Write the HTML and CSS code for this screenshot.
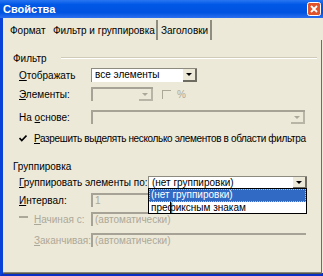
FILE: index.html
```html
<!DOCTYPE html>
<html lang="ru">
  <head>
    <meta charset="UTF-8" />
    <title>Свойства</title>
    <link rel="stylesheet" href="styles.css">
  </head>
  <body>
    <div class="window">
      <div class="titlebar">
        <span class="title">Свойства</span>
        <span class="close">
          <svg width="14" height="14" viewBox="0 0 14 14">
            <rect x="0.5" y="0.5" width="13" height="13" rx="2" fill="#e0532b" stroke="#fff" />
            <path d="M4 4 L10 10 M10 4 L4 10" stroke="#fff" stroke-width="1.8" />
          </svg>
        </span>
      </div>

      <div class="tabs">
        <div class="tab t1">Формат</div>
        <div class="tab t2 active">Фильтр и группировка</div>
        <div class="tab t3">Заголовки</div>
      </div>

      <div class="panel">
        <div class="group-title"><span>Фильтр</span><i class="rule"></i></div>

        <div class="row r-show">
          <span class="lbl"><u>О</u>тображать</span>
          <div class="combo w-show">
            <span class="val">все элементы</span>
            <span class="btn"><b class="arr"></b></span>
          </div>
        </div>

        <div class="row r-items">
          <span class="lbl"><u>Э</u>лементы:</span>
          <div class="combo off w-items">
            <span class="val"></span>
            <span class="btn"><b class="arr"></b></span>
          </div>
          <span class="check off"></span>
          <span class="dim pct">%</span>
        </div>

        <div class="row r-base">
          <span class="lbl">На <u>о</u>снове:</span>
          <div class="combo off w-base">
            <span class="val"></span>
            <span class="btn"><b class="arr"></b></span>
          </div>
        </div>

        <div class="row r-multi">
          <svg class="tick" width="8" height="7" viewBox="0 0 8 7">
            <path d="M0.5 3 L2.8 5.6 L7.5 0.6" fill="none" stroke="#000" stroke-width="1.7" />
          </svg>
          <span class="long-text"><u>Р</u>азрешить выделять несколько элементов в области фильтра</span>
        </div>

        <div class="group-title g2"><span>Группировка</span></div>

        <div class="row r-group">
          <span class="lbl wide"><u>Г</u>руппировать элементы по:</span>
          <div class="combo w-group">
            <span class="val">(нет группировки)</span>
            <span class="btn"><b class="arr"></b></span>
            <ul class="list">
              <li class="sel">(нет группировки)</li>
              <li>префиксным знакам</li>
            </ul>
          </div>
        </div>

        <div class="row r-step">
          <span class="lbl"><u>И</u>нтервал:</span>
          <div class="field off w-step">1</div>
        </div>

        <div class="row r-start">
          <span class="check dash"></span>
          <span class="lbl dim short"><u>Н</u>ачиная с:</span>
          <div class="field off w-long">(автоматически)</div>
        </div>

        <div class="row r-end">
          <span class="lbl dim short pad"><u>З</u>аканчивая:</span>
          <div class="field off w-long">(автоматически)</div>
        </div>
      </div>
    </div>
  </body>
</html>
```

FILE: styles.css
```css
* {
  box-sizing: border-box;
}
body {
  margin: 0;
  background: #ece9d8;
  font-family: "Liberation Sans", Tahoma, Arial, sans-serif;
  font-size: 10px;
  color: #000;
  overflow: hidden;
}
u {
  text-decoration: underline;
}

/* window frame */
.window {
  width: 323px;
  height: 276px;
  background: #ece9d8;
  border-left: 3px solid #0842d6;
  border-bottom: 3px solid #0a2fc4;
  display: flex;
  flex-direction: column;
}
.titlebar {
  height: 18px;
  margin-left: -3px;
  padding-left: 3px;
  display: flex;
  align-items: center;
  background: linear-gradient(#2a76f2 0%, #0058e6 25%, #0052e0 70%, #2b6ff0 100%);
}
.title {
  flex: 1;
  color: #fff;
  font-weight: 700;
  font-size: 11px;
}
.close {
  width: 14px;
  height: 14px;
  margin-right: 2px;
  display: flex;
}

/* tabs */
.tabs {
  display: flex;
  height: 22px;
  padding-top: 2px;
}
.tab {
  height: 20px;
  line-height: 22px;
  white-space: nowrap;
}
.t1 {
  width: 45px;
  padding-left: 7px;
}
.t2 {
  width: 110px;
  padding-left: 5px;
  line-height: 21px;
  border-right: 2px solid #8f8d80;
}
.t3 {
  width: 54px;
  padding-left: 3px;
  border-right: 2px solid #8f8d80;
}

/* tab page */
.panel {
  flex: 1;
  position: relative;
  padding-top: 12px;
  border-right: 1px solid #6f6d62;
  margin-right: 1px;
  border-bottom: 1px solid #8a887a;
  box-shadow: 0 1px 0 #55544b;
}
.group-title {
  display: flex;
  align-items: center;
  height: 12px;
  padding-left: 10px;
}
.group-title .rule {
  flex: 0 0 256px;
  margin-left: 14px;
  border-top: 1px solid #cfcbb8;
  border-bottom: 1px solid #fff;
}
.g2 {
  margin-top: 15px;
}

.row {
  display: flex;
  align-items: center;
  height: 14px;
  padding-left: 16px;
  white-space: nowrap;
}
.row > * {
  flex-shrink: 0;
}
.r-show {
  margin-top: 4px;
}
.r-items {
  margin-top: 5px;
}
.r-base {
  margin-top: 9px;
}
.r-multi {
  margin-top: 7px;
}
.r-group {
  margin-top: 4px;
  height: 13px;
}
.r-step {
  margin-top: 4px;
}
.r-start {
  margin-top: 5px;
}
.r-end {
  margin-top: 7px;
}

.lbl {
  width: 72px;
}
.lbl.wide {
  width: 129px;
}
.lbl.short {
  width: 57px;
}
.lbl.pad {
  margin-left: 15px;
}
.dim {
  color: #aca899;
}
.long-text {
  letter-spacing: -0.35px;
}

/* combo boxes */
.combo {
  position: relative;
  height: 100%;
  display: flex;
  background: #fff;
  border-top: 1px solid #8d8b7f;
  border-left: 1px solid #8d8b7f;
}
.combo .val {
  flex: 1;
  padding-left: 3px;
  line-height: 12px;
  overflow: hidden;
}
.combo .btn {
  width: 14px;
  display: flex;
  align-items: center;
  justify-content: center;
  background: #ece9d8;
  border-right: 2px solid #6e6c60;
  border-bottom: 2px solid #6e6c60;
}
.arr {
  border-left: 3px solid transparent;
  border-right: 3px solid transparent;
  border-top: 3px solid #000;
}
.combo.off {
  background: #ece9d8;
  border-top: 2px solid #a6a396;
  border-left: 2px solid #a6a396;
}
.combo.off .btn {
  border-color: #b8b5a6;
}
.combo.off .arr {
  border-top-color: #aca899;
}
.w-show {
  width: 106px;
}
.w-items {
  width: 62px;
}
.w-base {
  width: 214px;
}
.w-group {
  width: 159px;
}

/* open drop-down list */
.list {
  position: absolute;
  left: -1px;
  top: 11px;
  width: 159px;
  height: 26px;
  margin: 0;
  padding: 0;
  list-style: none;
  background: #fff;
  border: 1px solid #000;
  z-index: 2;
}
.list li {
  height: 12px;
  line-height: 12px;
  padding-left: 2px;
}
.list li.sel {
  height: 13px;
  color: #fff;
  background: #316ac5;
  outline: 1px dotted #f0c050;
  outline-offset: -1px;
}
.list::after {
  content: "";
  position: absolute;
  left: 21px;
  top: 13px;
  height: 11px;
  border-left: 1px solid #000;
}

/* text fields */
.field {
  height: 100%;
  padding-left: 2px;
  line-height: 12px;
  color: #aca899;
  border-top: 2px solid #a6a396;
  border-left: 2px solid #a6a396;
}
.w-step {
  width: 80px;
}
.w-long {
  width: 215px;
}

/* check boxes */
.check {
  width: 9px;
  height: 9px;
}
.check.off {
  margin-left: 9px;
  margin-right: 6px;
  border-top: 1px solid #aca899;
  border-left: 1px solid #aca899;
}
.check.dash {
  margin-right: 6px;
  align-self: flex-start;
  margin-top: 4px;
  border-top: 2px solid #aca899;
}
.tick {
  margin-left: 0;
  margin-right: 7px;
}
```
